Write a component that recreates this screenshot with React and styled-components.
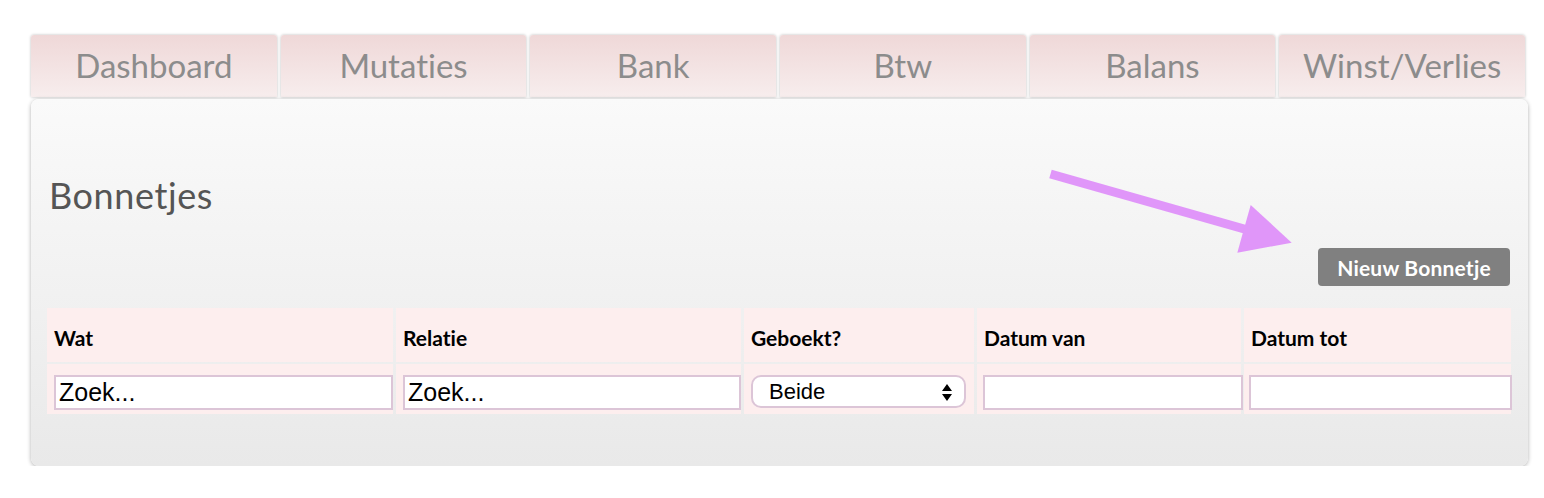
import styled, { createGlobalStyle } from 'styled-components';

const GlobalStyle = createGlobalStyle`
  body {
    margin: 0;
    background: #ffffff;
    font-family: Lato, "Open Sans", sans-serif;
    font-variant-ligatures: none;
  }
`

const Page = styled.div`
  padding: 35px 0 0 31px;
  width: 1497px;
`
const Tabs = styled.nav`
  display: grid;
  grid-template-columns: repeat(6, 1fr);
  gap: 4px;
  width: 1494px;
  margin-bottom: 2px;
`
const Tab = styled.a`
  height: 62px;
  display: flex;
  align-items: center;
  justify-content: center;
  padding-bottom: 2px;
  box-sizing: border-box;
  border-radius: 3px 3px 0 0;
  background: linear-gradient(#efd8d8, #f7eded);
  box-shadow: 0 0 3px rgba(0, 0, 0, 0.28);
  color: #8c8c8c;
  font-size: 33px;
  text-decoration: none;
  cursor: pointer;
`
const Panel = styled.section`
  position: relative;
  padding: 76px 17px 52px 16px;
  border-radius: 8px;
  background: linear-gradient(#fafafa, #e9e9e9);
  box-shadow: 0 1px 4px rgba(0, 0, 0, 0.32);
`
const Title = styled.h1`
  margin: 0 0 0 2px;
  font-size: 36px;
  line-height: 40px;
  letter-spacing: 0.6px;
  font-weight: 400;
  color: #555555;
`
const Actions = styled.div`
  display: flex;
  justify-content: flex-end;
  margin: 33px 1px 22px 0;
`
const Button = styled.button`
  width: 192px;
  height: 38px;
  padding: 0;
  border: none;
  border-radius: 4px;
  background: #808080;
  color: #ffffff;
  font-family: Lato, "Open Sans", sans-serif;
  font-size: 21px;
  font-weight: 700;
  letter-spacing: 0.2px;
  cursor: pointer;
`
const Arrow = styled.svg`
  position: absolute;
  left: 1015px;
  top: 65px;
  width: 270px;
  height: 160px;
`
const Table = styled.div`
  display: grid;
  grid-template-columns: 346px 345px 230px 264px 267px;
  grid-template-rows: 54px 50px;
  gap: 2px 3px;
`
const HeadCell = styled.div`
  display: flex;
  align-items: center;
  padding: 4px 0 0 7px;
  background: #fdeeee;
  color: #000000;
  font-size: 21px;
  font-weight: 700;
`
const Cell = styled.div`
  display: flex;
  align-items: center;
  padding: 0 ${p => p.$right || 0}px 0 ${p => p.$left || 7}px;
  background: #fdeeee;
`
const Input = styled.input`
  box-sizing: border-box;
  width: ${p => p.$width}px;
  height: 35px;
  margin-top: 7px;
  padding: 0 3px;
  border: 2px solid #dcc5d7;
  background: #ffffff;
  font-family: "Liberation Sans", Arial, sans-serif;
  font-size: 25px;
  color: #000000;
  outline: none;
  &::placeholder {
    color: #000000;
    opacity: 1;
  }
`
const SelectBox = styled.div`
  position: relative;
  box-sizing: border-box;
  width: 215px;
  height: 33px;
  margin-top: 5px;
  border: 2px solid #dcc5d7;
  border-radius: 10px;
  background: #ffffff;
`
const Select = styled.select`
  appearance: none;
  width: 100%;
  height: 100%;
  padding: 0 0 0 16px;
  border: none;
  background: transparent;
  font-family: "Liberation Sans", Arial, sans-serif;
  font-size: 22px;
  color: #000000;
  outline: none;
`
const Chevrons = styled.svg`
  position: absolute;
  right: 12px;
  top: 7px;
  width: 10px;
  height: 17px;
  pointer-events: none;
`

const tabs = ['Dashboard', 'Mutaties', 'Bank', 'Btw', 'Balans', 'Winst/Verlies'];
const columns = ['Wat', 'Relatie', 'Geboekt?', 'Datum van', 'Datum tot'];

const App = () => {
  return (
    <Page>
      <GlobalStyle />
      <Tabs>
        {tabs.map(t => <Tab key={t}>{t}</Tab>)}
      </Tabs>
      <Panel>
        <Title>Bonnetjes</Title>
        <Actions>
          <Button>Nieuw Bonnetje</Button>
        </Actions>
        <Table>
          {columns.map(c => <HeadCell key={c}>{c}</HeadCell>)}
          <Cell><Input $width={339} placeholder="Zoek..." /></Cell>
          <Cell><Input $width={338} placeholder="Zoek..." /></Cell>
          <Cell>
            <SelectBox>
              <Select defaultValue="beide">
                <option value="beide">Beide</option>
                <option value="ja">Ja</option>
                <option value="nee">Nee</option>
              </Select>
              <Chevrons viewBox="0 0 10 17">
                <path d="M5 0 L10 7 L0 7 Z M0 10 L10 10 L5 17 Z" fill="#000" />
              </Chevrons>
            </SelectBox>
          </Cell>
          <Cell $left={6}><Input $width={260} /></Cell>
          <Cell $left={5}><Input $width={263} /></Cell>
        </Table>
        <Arrow viewBox="0 0 270 160">
          <line x1="4.5" y1="10" x2="200" y2="65.5" stroke="#e096f9" strokeWidth="9" />
          <polygon points="245.7,78.7 204.7,41 191.3,88.7" fill="#e096f9" />
        </Arrow>
      </Panel>
    </Page>
  )
};

export default App;
